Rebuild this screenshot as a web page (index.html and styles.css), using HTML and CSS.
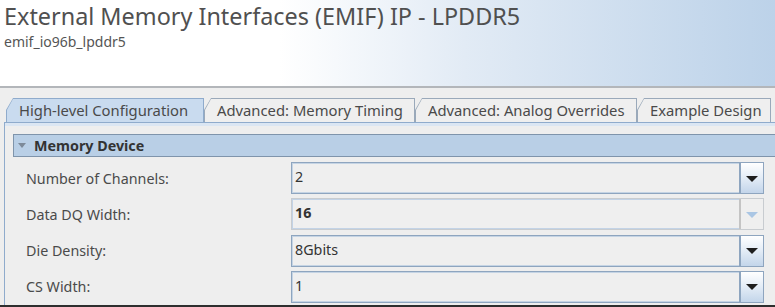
FILE: index.html
```html
<!DOCTYPE html>
<html lang="en">
  <head>
    <meta charset="UTF-8">
    <meta name="viewport" content="width=device-width, initial-scale=1.0">
    <title>External Memory Interfaces (EMIF) IP - LPDDR5</title>
    <link rel="stylesheet" href="styles.css">
  </head>
  <body>
    <header class="banner">
      <h1>External Memory Interfaces (EMIF) IP - LPDDR5</h1>
      <div class="instance">emif_io96b_lpddr5</div>
    </header>

    <nav class="tab-bar">
      <div class="tab tab-active tab-w1"><span class="tab-face">High-level Configuration</span></div>
      <div class="tab tab-w2"><span class="tab-face">Advanced: Memory Timing</span></div>
      <div class="tab tab-w3"><span class="tab-face">Advanced: Analog Overrides</span></div>
      <div class="tab tab-w4"><span class="tab-face">Example Design</span></div>
    </nav>

    <section class="panel">
      <div class="group-header">
        <span class="group-arrow"></span>
        <span>Memory Device</span>
      </div>
      <div class="param-grid">
        <label class="param-label">Number of Channels:</label>
        <div class="combo">
          <span class="combo-value">2</span>
          <span class="combo-button"><span class="arrow"></span></span>
        </div>

        <label class="param-label">Data DQ Width:</label>
        <div class="combo combo-disabled">
          <span class="combo-value combo-bold">16</span>
          <span class="combo-button"><span class="arrow"></span></span>
        </div>

        <label class="param-label">Die Density:</label>
        <div class="combo">
          <span class="combo-value">8Gbits</span>
          <span class="combo-button"><span class="arrow"></span></span>
        </div>

        <label class="param-label">CS Width:</label>
        <div class="combo">
          <span class="combo-value">1</span>
          <span class="combo-button"><span class="arrow"></span></span>
        </div>
      </div>
    </section>
  </body>
</html>
```

FILE: styles.css
```css
* {
  box-sizing: border-box;
}

html {
  height: 307px;
  overflow: hidden;
}

body {
  margin: 0;
  height: 307px;
  overflow: hidden;
  font-family: "Noto Sans", "Open Sans", sans-serif;
  background-color: #eeeeee;
  color: #444;
  border-bottom: 2px solid #2e2e2e;
}

.banner {
  height: 88px;
  padding: 0 4px;
  background: linear-gradient(to right, #ffffff 0%, #ffffff 36%, #e2ebf5 60%, #bcd2e9 100%);
  border-bottom: 2px solid #b3b6ba;
}

.banner h1 {
  margin: 0;
  font-size: 23.4px;
  font-weight: normal;
  line-height: 32px;
  color: #505050;
}

.instance {
  font-size: 14px;
  line-height: 19px;
  color: #555;
}

/* Tabs */
.tab-bar {
  display: flex;
  padding-left: 6px;
  margin-top: 10px;
  height: 24px;
}

.tab {
  height: 24px;
  padding: 1px 1px 0 1px;
  background-color: #9aa9ba;
  clip-path: polygon(0 12px, 7px 0, 100% 0, 100% 100%, 0 100%);
}

.tab-face {
  display: block;
  height: 23px;
  padding-left: 12px;
  font-size: 14.8px;
  line-height: 22px;
  color: #4a4a4a;
  white-space: nowrap;
  background-color: #efefef;
  clip-path: polygon(0 11px, 6px 0, 100% 0, 100% 100%, 0 100%);
}

.tab-active {
  background-color: #8fabcc;
}

.tab-active .tab-face {
  background-color: #c9dbef;
}

.tab-w1 { width: 198px; }
.tab-w2 { width: 211px; }
.tab-w3 { width: 222px; }
.tab-w4 { width: 134px; }

/* Panel */
.panel {
  margin-left: 4px;
  border-top: 1px solid #8fabcc;
  border-left: 1px solid #8fabcc;
  box-shadow: inset 0 3px 0 #dbe6f3;
  padding: 11px 0 0 8px;
  height: 183px;
}

.group-header {
  display: flex;
  align-items: center;
  height: 23px;
  background-color: #b9cfe6;
  border: 1px solid #7f94ab;
  border-right: none;
  font-size: 14.3px;
  font-weight: bold;
  color: #333;
}

.group-arrow {
  width: 0;
  height: 0;
  margin: 0 8px 0 4px;
  border-left: 4px solid transparent;
  border-right: 4px solid transparent;
  border-top: 5px solid #7d8a99;
}

.param-grid {
  display: grid;
  grid-template-columns: 265px 473px;
  grid-auto-rows: 32px;
  row-gap: 4.3px;
  margin-top: 5px;
  padding-left: 13px;
}

.param-label {
  display: flex;
  align-items: center;
  font-size: 14.3px;
  color: #4a4a4a;
}

.combo {
  display: flex;
  border: 1px solid #8ea5bf;
  box-shadow: inset 0 0 0 1px #c5d4e4;
  background-color: #efefef;
}

.combo-value {
  flex: 1;
  padding: 4px 0 0 3px;
  font-size: 14.3px;
  color: #333;
}

.combo-bold {
  font-weight: bold;
}

.combo-button {
  width: 24px;
  display: flex;
  align-items: center;
  justify-content: center;
  border-left: 2px solid #8ea5bf;
  background: linear-gradient(to bottom, #ffffff 0%, #e6eef7 45%, #c3d5ea 100%);
}

.arrow {
  width: 0;
  height: 0;
  margin-top: 1px;
  border-left: 6px solid transparent;
  border-right: 6px solid transparent;
  border-top: 6px solid #1e1e1e;
}

.combo-disabled {
  border-color: #c8ccd0;
  box-shadow: inset 0 0 0 1px #c3d3e6;
}

.combo-disabled .combo-button {
  border-left-color: #c4c4c4;
  background: #efefef;
}

.combo-disabled .arrow {
  border-top-color: #aac6e4;
}
```
